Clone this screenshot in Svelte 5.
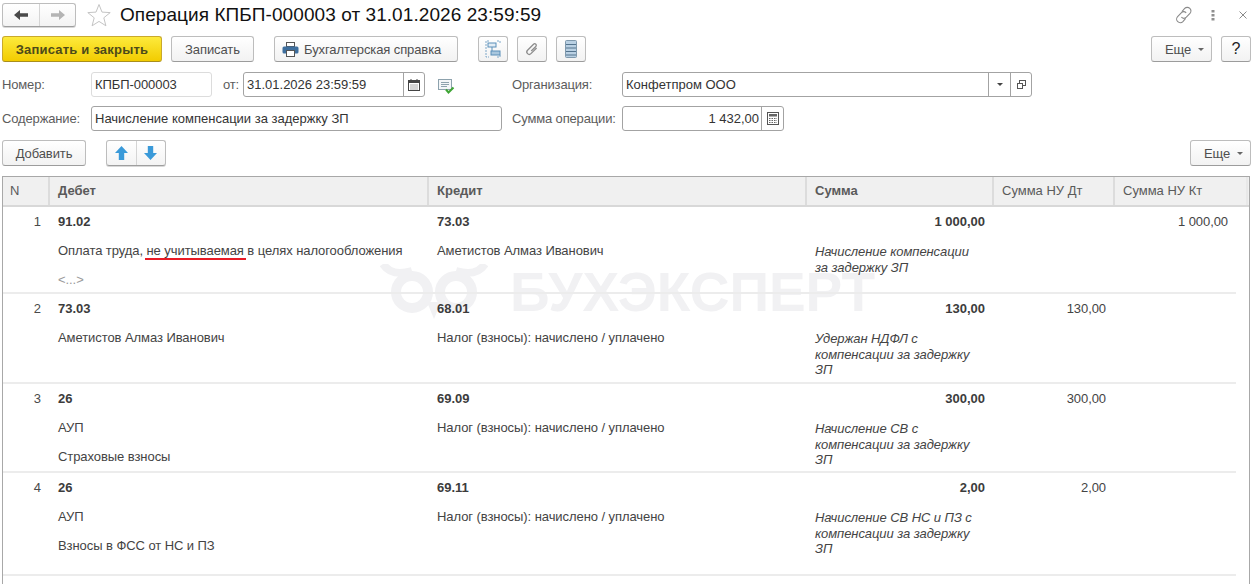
<script>
  const rows = [
    { n: 1, h: 87, d: ['91.02', 'Оплата труда, не учитываемая в целях налогообложения', '<...>'], k: ['73.03', 'Аметистов Алмаз Иванович'], s: '1 000,00', c: ['Начисление компенсации', 'за задержку ЗП'], dt: '', kt: '1 000,00' },
    { n: 2, h: 90, d: ['73.03', 'Аметистов Алмаз Иванович'], k: ['68.01', 'Налог (взносы): начислено / уплачено'], s: '130,00', c: ['Удержан НДФЛ с', 'компенсации за задержку', 'ЗП'], dt: '130,00', kt: '' },
    { n: 3, h: 89, d: ['26', 'АУП', 'Страховые взносы'], k: ['69.09', 'Налог (взносы): начислено / уплачено'], s: '300,00', c: ['Начисление СВ с', 'компенсации за задержку', 'ЗП'], dt: '300,00', kt: '' },
    { n: 4, h: 103, d: ['26', 'АУП', 'Взносы в ФСС от НС и ПЗ'], k: ['69.11', 'Налог (взносы): начислено / уплачено'], s: '2,00', c: ['Начисление СВ НС и ПЗ с', 'компенсации за задержку', 'ЗП'], dt: '2,00', kt: '' }
  ];
</script>

<div class="page">
  <header class="top">
    <div class="group nav">
      <button class="seg" aria-label="Назад"><svg width="16" height="12" viewBox="0 0 16 12"><path d="M1 6l6-5v3.200h8v3.600H7V11z" fill="#4a4a4a"/></svg></button>
      <button class="seg" aria-label="Вперёд"><svg width="16" height="12" viewBox="0 0 16 12"><path d="M15 6L9 1v3.200H1v3.600h8V11z" fill="#b4b4b4"/></svg></button>
    </div>
    <svg class="star" width="24" height="24" viewBox="0 0 24 24"><path d="M12 1.500l3 7.600 8.200.5-6.400 5.200 2.100 8-6.900-4.400-6.900 4.400 2.100-8L.8 9.600 9 9.100z" fill="none" stroke="#c4c4c4"/></svg>
    <h1>Операция КПБП-000003 от 31.01.2026 23:59:59</h1>
    <div class="winicons">
      <svg width="18" height="18" viewBox="2.500 2.500 13 13" fill="none" stroke="#8a8a8a" stroke-width=".8"><path d="M7.500 6.500l2-2.200a2.600 2.600 0 0 1 3.800 3.600l-2.600 2.700a2.600 2.600 0 0 1-3.600 0"/><path d="M10.200 11.400l-2 2.300a2.600 2.600 0 0 1-3.800-3.600L7 7.400a2.600 2.600 0 0 1 3.600 0"/></svg>
      <svg class="dots" width="4" height="11" viewBox="0 0 4 11" fill="#8f8f8f"><rect x="0.500" y="0" width="3" height="2.500"/><rect x="0.500" y="4" width="3" height="2.500"/><rect x="0.500" y="8" width="3" height="2.500"/></svg>
      <svg class="close" width="8" height="8" viewBox="0 0 8 8" stroke="#8a8a8a" fill="none"><path d="M.5.5l7 7M7.500.5l-7 7"/></svg>
    </div>
  </header>

  <div class="toolbar">
    <button class="btn primary">Записать и закрыть</button>
    <button class="btn save">Записать</button>
    <button class="btn print">
      <svg width="17" height="15" viewBox="0 0 17 15"><rect x="4.500" y=".5" width="8" height="4" fill="#fff" stroke="#555"/><rect x=".5" y="4.500" width="16" height="7" rx="1.500" fill="#3e6f9e"/><rect x="4.500" y="8.500" width="8" height="6" fill="#fff" stroke="#555"/></svg>
      Бухгалтерская справка
    </button>
    <button class="btn icon first" aria-label="Структура"><svg width="16" height="18" viewBox="0 0 16 18"><path d="M4 1H1v16h3M12 1h3v3M12 17h3v-3" fill="none" stroke="#7fa8c9" stroke-dasharray="2 1"/><rect x="3" y="3" width="8" height="4" fill="#e3edf5" stroke="#5b8fb9"/><rect x="6" y="11" width="9" height="4" fill="#a9c7de" stroke="#5b8fb9"/><path d="M7 7v4" stroke="#5b8fb9"/></svg></button>
    <button class="btn icon" aria-label="Файлы"><svg width="16" height="16" viewBox="0 0 16 16"><g transform="rotate(45 8 8)"><path d="M10.500 4v8a2.400 2.400 0 0 1-4.800 0V3.500a1.600 1.600 0 0 1 3.200 0V10" fill="none" stroke="#8d8d8d" stroke-width="1.300"/></g></svg></button>
    <button class="btn icon" aria-label="Список"><svg width="12" height="18" viewBox="0 0 12 18"><rect x=".5" y=".5" width="11" height="17" rx="1" fill="#b9d0e3" stroke="#7f99ad"/><path d="M1 4.500h10M1 8h10M1 11.500h10M1 15h10" stroke="#54748e"/></svg></button>
    <div class="spacer"></div>
    <button class="btn more">Еще<span class="caret"></span></button>
    <button class="btn help">?</button>
  </div>

  <div class="formrow one">
    <span class="lab nomer">Номер:</span>
    <div class="field soft num">КПБП-000003</div>
    <span class="lab ot">от:</span>
    <div class="field date"><span class="val">31.01.2026 23:59:59</span><span class="cell"><svg width="12" height="12" viewBox="0 0 12 12"><rect x=".5" y="1.500" width="11" height="10" fill="#fff" stroke="#444"/><rect x="1" y="1" width="10" height="3" fill="#444"/><path d="M2.500 6h7M2.500 8h7M2.500 10h7" stroke="#555" stroke-dasharray="1 1"/><path d="M3 0v2M9 0v2" stroke="#444"/></svg></span></div>
    <svg class="posted" width="17" height="15" viewBox="0 0 17 15"><rect x=".5" y=".5" width="13" height="10" fill="#f3f6f8" stroke="#8da2ad"/><path d="M3 3.500h8M3 5.500h8M3 7.500h6" stroke="#8da2ad"/><path d="M8 10.500l2.500 3 5-5" fill="none" stroke="#3fa535" stroke-width="2"/></svg>
    <span class="lab org">Организация:</span>
    <div class="field orgf"><span class="val">Конфетпром ООО</span><span class="cell dd"><span class="caret dark"></span></span><span class="cell open"><svg width="9" height="9" viewBox="0 0 9 9" fill="#fff" stroke="#555"><rect x="2.500" y=".5" width="6" height="5"/><rect x=".5" y="3.500" width="5" height="5"/></svg></span></div>
  </div>

  <div class="formrow two">
    <span class="lab nomer">Содержание:</span>
    <div class="field content"><span class="val">Начисление компенсации за задержку ЗП</span></div>
    <span class="lab sum">Сумма операции:</span>
    <div class="field amount"><span class="val right">1 432,00</span><span class="cell"><svg width="12" height="13" viewBox="0 0 12 13"><rect x=".5" y=".5" width="11" height="12" fill="#fff" stroke="#555"/><rect x="2" y="2" width="8" height="2.500" fill="#666"/><path d="M2 6.500h8M2 8.500h8M2 10.500h8" stroke="#666" stroke-dasharray="1.500 1"/></svg></span></div>
  </div>

  <div class="tabletools">
    <button class="btn add">Добавить</button>
    <div class="group move">
      <button class="seg" aria-label="Вверх"><svg width="13" height="14" viewBox="0 0 13 14"><path d="M6.500 0L13 7H9.200v7H3.800V7H0z" fill="#3a9ad9"/></svg></button>
      <button class="seg" aria-label="Вниз"><svg width="13" height="14" viewBox="0 0 13 14"><path d="M6.500 14L13 7H9.200V0H3.800v7H0z" fill="#3a9ad9"/></svg></button>
    </div>
    <div class="spacer"></div>
    <button class="btn more">Еще<span class="caret"></span></button>
  </div>

  <section class="table">
    <div class="watermark" aria-hidden="true">
      <svg width="108" height="56" viewBox="0 0 108 56" fill="none"><circle cx="32" cy="28" r="16" stroke="#f1f1f3" stroke-width="10"/><circle cx="76" cy="28" r="16" stroke="#f1f1f3" stroke-width="10"/><path d="M3 0c6 9 15 11 29 7M105 0c-6 9-15 11-29 7" stroke="#f1f1f3" stroke-width="8"/><path d="M47 38h14l-7 17z" fill="#f1f1f3"/></svg>
      <span>БУХЭКСПЕРТ</span>
    </div>
    <div class="head">
      <div class="hc n">N</div>
      <div class="hc strong">Дебет</div>
      <div class="hc strong">Кредит</div>
      <div class="hc strong">Сумма</div>
      <div class="hc">Сумма НУ Дт</div>
      <div class="hc">Сумма НУ Кт</div>
    </div>
    {#each rows as r}
      <div class="row" style="height:{r.h}px">
        <div class="c num">{r.n}</div>
        <div class="c">
          {#each r.d as t, i}
            <div class="line" class:b={i === 0} class:muted={t === '<...>'}>
              {#if t.includes('не учитываемая')}Оплата труда, <span class="mark">не учитываемая</span> в целях налогообложения{:else}{t}{/if}
            </div>
          {/each}
        </div>
        <div class="c">
          {#each r.k as t, i}<div class="line" class:b={i === 0}>{t}</div>{/each}
        </div>
        <div class="c sumc">
          <div class="line b right">{r.s}</div>
          <div class="comment">{#each r.c as t}<div>{t}</div>{/each}</div>
        </div>
        <div class="c"><div class="line right">{r.dt}</div></div>
        <div class="c lastc"><div class="line right">{r.kt}</div></div>
      </div>
    {/each}
  </section>
</div>

<style>
  :global(body) { margin: 0; background: #fff; }
  .page { width: 1254px; height: 584px; overflow: hidden; font-family: "Liberation Sans", Arial, sans-serif; font-size: 13px; color: #4a4a4a; box-sizing: border-box; padding: 2px 0 0 2px; }
  button { font: inherit; color: inherit; cursor: default; }

  .top { display: flex; align-items: center; height: 25px; }
  .group { display: flex; border: 1px solid #bdbdbd; border-bottom-color: #9e9e9e; border-radius: 3px; background: linear-gradient(#fff, #f3f3f3); box-shadow: 0 1px 0 #d8d8d8; box-sizing: border-box; }
  .seg { border: 0; background: none; padding: 0; display: flex; align-items: center; justify-content: center; }
  .seg + .seg { border-left: 1px solid #d5d5d5; }
  .nav { width: 74px; height: 24px; }
  .nav .seg { width: 36px; }
  .star { margin-left: 11px; }
  h1 { margin: 0 0 0 9px; font-size: 19px; letter-spacing: .07px; font-weight: 400; color: #111; line-height: 25px; white-space: nowrap; }
  .winicons { margin-left: auto; align-self: flex-start; display: flex; align-items: center; padding: 4px 7px 0 0; }
  .dots { margin-left: 18px; }
  .close { margin-left: 24px; }

  .toolbar { display: flex; align-items: center; height: 26px; margin-top: 9px; padding-right: 3px; }
  .btn { height: 26px; box-sizing: border-box; border: 1px solid #bdbdbd; border-bottom-color: #9c9c9c; border-radius: 3px; background: linear-gradient(#fff, #f2f2f2); padding: 0; display: flex; align-items: center; justify-content: center; white-space: nowrap; color: #4f4f4f; font-size: 13px; letter-spacing: -.1px; flex: none; }
  .primary { width: 160px; background: linear-gradient(#fdea3c, #f2cc00); border-color: #c9a92c; border-bottom-color: #a98e1c; font-weight: 700; color: #4d4a1a; letter-spacing: .2px; }
  .save { width: 83px; margin-left: 9px; }
  .print { width: 184px; margin-left: 20px; gap: 5px; justify-content: flex-start; padding-left: 7px; }
  .icon { width: 30px; }
  .icon.first { margin-left: 20px; }
  .icon + .icon { margin-left: 9px; }
  .spacer { flex: 1; }
  .more { width: 61px; gap: 7px; justify-content: flex-start; padding-left: 13px; }
  .help { width: 30px; margin-left: 9px; font-size: 16px; color: #222; font-weight: 400; }
  .caret { display: inline-block; width: 0; height: 0; border: 3px solid transparent; border-top: 3px solid #666; border-bottom: 0; }
  .caret.dark { border-top-color: #444; }

  .formrow { display: flex; align-items: center; height: 25px; }
  .one { margin-top: 10px; }
  .two { margin-top: 9px; }
  .lab { color: #5c5c5c; flex: none; letter-spacing: -.15px; }
  .nomer { width: 89px; }
  .field { height: 25px; box-sizing: border-box; border: 1px solid #a3a3a3; border-radius: 3px; display: flex; align-items: center; background: #fff; color: #333; flex: none; }
  .soft { border-color: #dcdcdc; }
  .num.field { width: 121px; padding-left: 3px; letter-spacing: -.07px; }
  .ot { margin-left: 11px; width: 20px; }
  .date { width: 182px; }
  .val { flex: 1; padding: 0 3px; white-space: nowrap; }
  .right { text-align: right; }
  .cell { align-self: stretch; display: flex; align-items: center; justify-content: center; border-left: 1px solid #a3a3a3; flex: none; }
  .date .cell { width: 20px; }
  .posted { margin-left: 13px; margin-top: 3px; }
  .org { margin-left: 57px; width: 110px; }
  .orgf { width: 410px; }
  .dd { width: 21px; }
  .open { width: 20px; }
  .content { width: 411px; }
  .sum { margin-left: 10px; width: 110px; }
  .amount { width: 162px; }
  .amount .cell { width: 21px; }
  .amount .val { padding-right: 2px; }

  .tabletools { display: flex; align-items: center; height: 26px; margin-top: 9px; padding-right: 3px; }
  .add { width: 84px; }
  .move { margin-left: 20px; width: 60px; height: 26px; }
  .move .seg { width: 30px; }

  .table { position: relative; z-index: 0; margin-top: 10px; width: 1248px; height: 410px; box-sizing: border-box; border: 1px solid #a8a8a8; border-bottom: 0; }
  .head { display: grid; grid-template-columns: 47px 379px 378px 187px 121px 133px; height: 28px; background: #f0f0f0; border-bottom: 2px solid #d8d8d8; box-sizing: content-box; }
  .hc { display: flex; align-items: center; padding: 0 0 2px 8px; border-right: 2px solid #dcdcdc; box-sizing: border-box; color: #5a5a5a; }
  .hc:last-child { border-right-color: #e8e8e8; }
  .hc.strong { font-weight: 700; }
  .hc.n { padding-left: 7px; }
  .row { position: relative; display: grid; grid-template-columns: 47px 379px 378px 187px 121px 133px; border-bottom: 2px solid #ececec; box-sizing: border-box; width: 1233px; }
  .c { padding: 0 8px; min-width: 0; }
  .c.num { text-align: right; padding-top: 7px; line-height: 15px; padding-right: 9px; color: #4a4a4a; }
  .line { height: 29px; line-height: 15px; padding-top: 7px; box-sizing: border-box; white-space: nowrap; color: #444; letter-spacing: -.07px; }
  .line.b { font-weight: 700; color: #3c3c3c; letter-spacing: 0; }
  .line.muted { color: #9a9a9a; }
  .line.right { text-align: right; padding-right: 1px; }
  .c.lastc .line.right { padding-right: 12px; }
  .mark { position: relative; }
  .mark::after { content: ""; position: absolute; left: -2px; right: -2px; top: 15px; height: 2px; background: #e81b25; }
  .comment { font-style: italic; line-height: 15.5px; color: #444; margin-top: 8px; white-space: nowrap; letter-spacing: -.07px; }

  .watermark { position: absolute; left: 377px; top: 87px; display: flex; align-items: flex-start; gap: 22px; font-size: 55px; font-weight: 700; color: #f1f1f3; pointer-events: none; white-space: nowrap; z-index: -1; }
  .watermark span { line-height: 58px; margin-top: -1px; }
</style>
